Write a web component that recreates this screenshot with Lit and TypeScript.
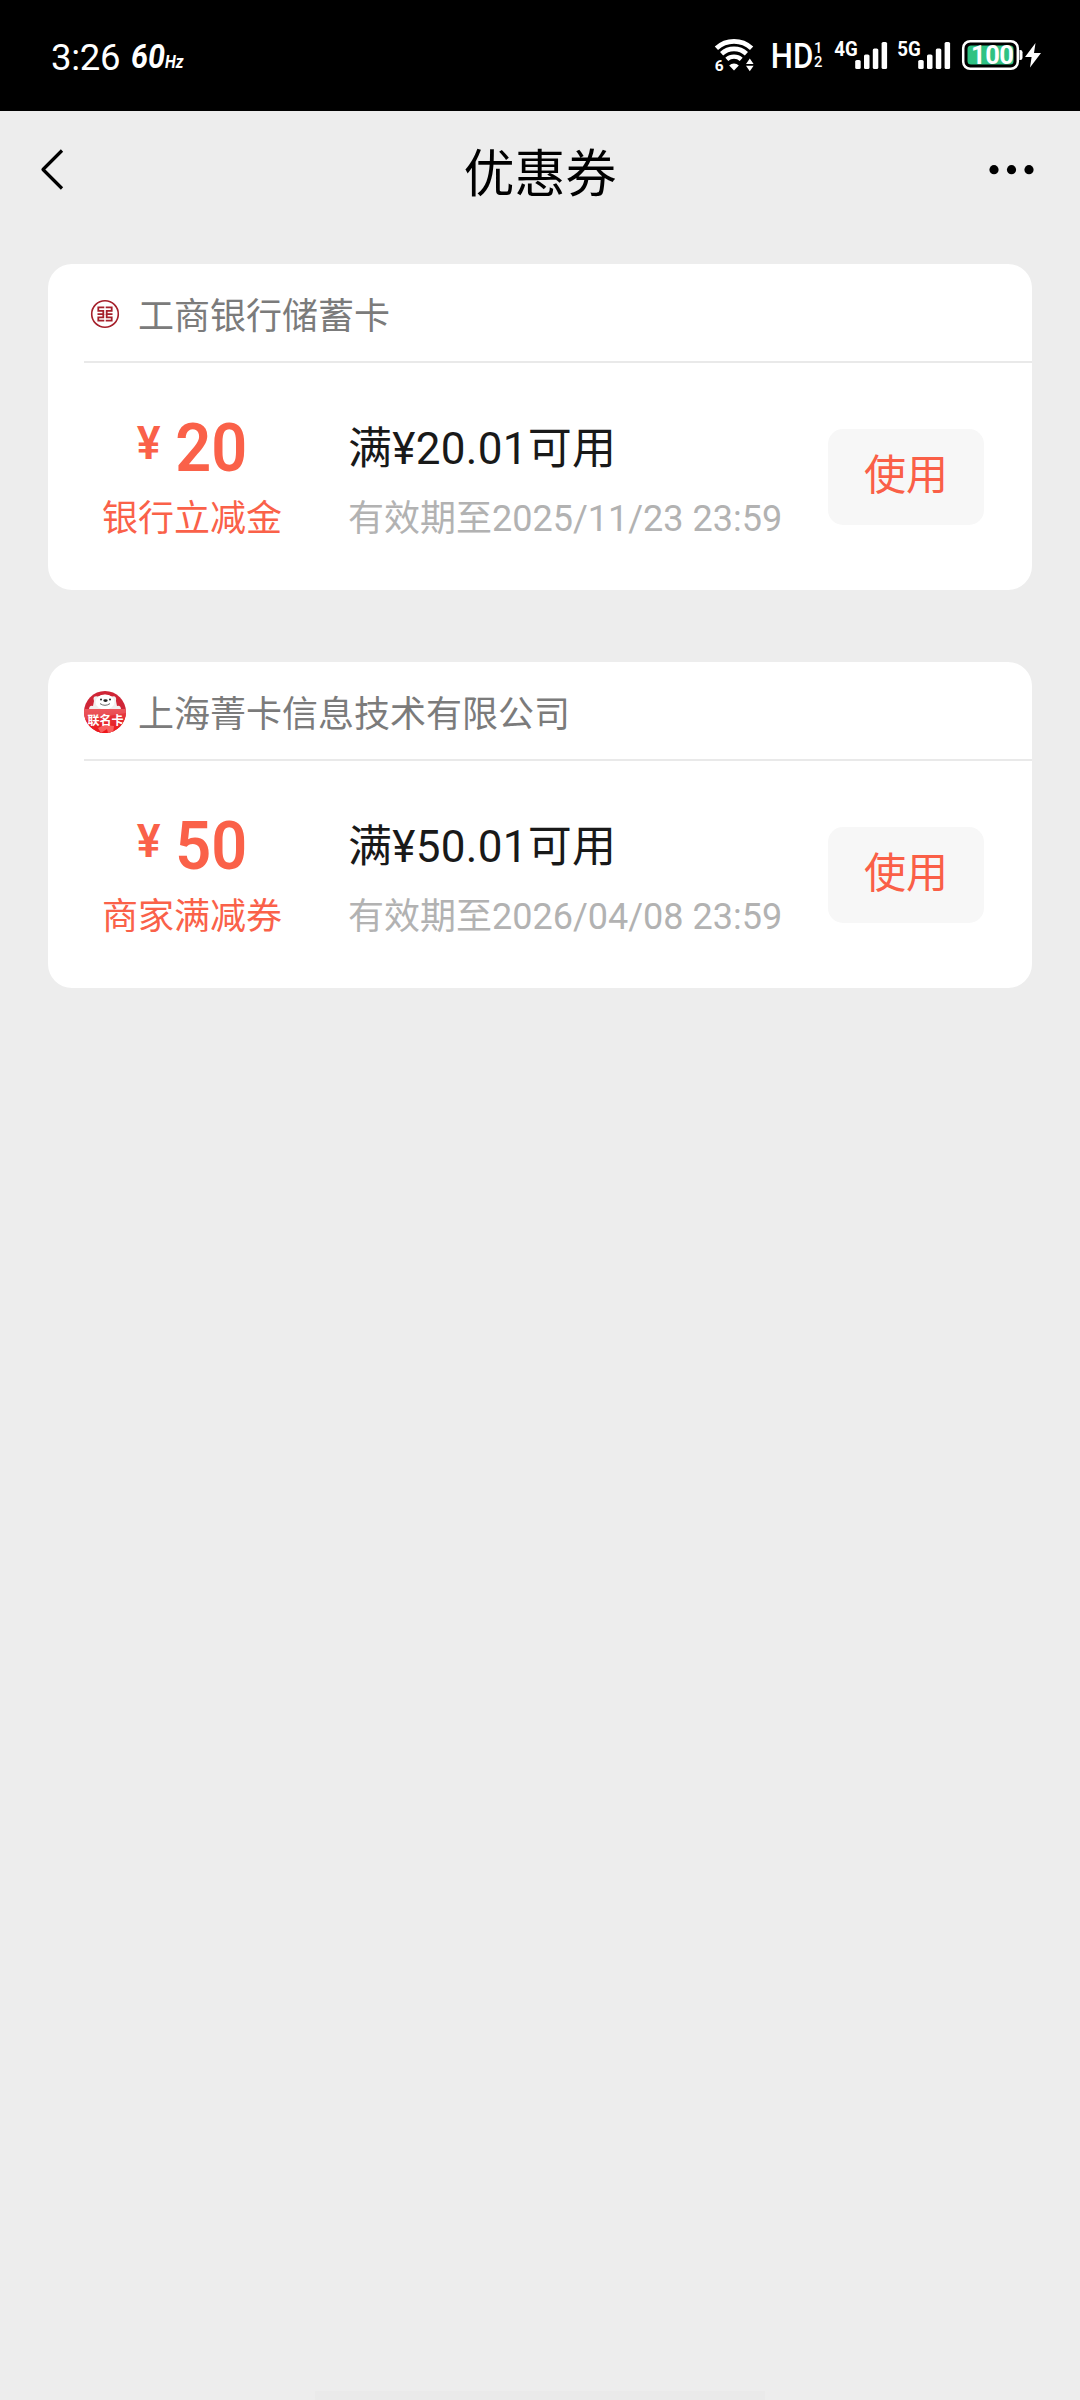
import { LitElement, html, svg, css } from "lit";
import { customElement, property } from "lit/decorators.js";

interface Coupon {
  issuer: string;
  logo: "icbc" | "joint";
  amount: string;
  kind: string;
  condition: string;
  expiry: string;
}

const COUPONS: Coupon[] = [
  {
    issuer: "工商银行储蓄卡",
    logo: "icbc",
    amount: "20",
    kind: "银行立减金",
    condition: "满¥20.01可用",
    expiry: "有效期至2025/11/23 23:59",
  },
  {
    issuer: "上海菁卡信息技术有限公司",
    logo: "joint",
    amount: "50",
    kind: "商家满减券",
    condition: "满¥50.01可用",
    expiry: "有效期至2026/04/08 23:59",
  },
];

@customElement("status-bar")
class StatusBar extends LitElement {
  static styles = css`
    :host {
      display: flex;
      box-sizing: border-box;
      height: 111px;
      padding: 0 38px 0 51px;
      background: #000;
      color: #fff;
      font-family: Roboto, "Noto Sans CJK SC", sans-serif;
    }
    .time {
      font-size: 36.5px;
      line-height: 40px;
      margin-top: 38px;
      letter-spacing: -0.3px;
    }
    .grow {
      flex: 1;
    }
    svg {
      display: block;
      margin-top: 36px;
      height: 40px;
      fill: #fff;
    }
    .rate { width: 56px; margin-left: 11px; }
    .wifi { width: 42px; }
    .hd { width: 52px; margin-left: 15.5px; }
    .sim { width: 56px; margin-left: 7px; }
    .sim.first { margin-left: 9px; }
    .battery { width: 82px; margin-left: 8.5px; }
    .line { fill: none; stroke: #fff; }
    .green { fill: #2fc283; }
    .digit { font-weight: 500; }
    .bold { font-weight: 700; }
  `;

  private signal(label: string, first: boolean) {
    return html`<svg class="sim ${first ? "first" : ""}" viewBox="0 0 56 40">
      <text class="bold" x="1.2" y="20.3" font-size="19.5" textLength="23.5" lengthAdjust="spacingAndGlyphs">${label}</text>
      <rect x="22.2" y="24" width="5.5" height="9" rx="1.6" />
      <rect x="31" y="18.5" width="5.5" height="14.5" rx="1.6" />
      <rect x="39.8" y="12.5" width="5.5" height="20.5" rx="1.6" />
      <rect x="48.6" y="6" width="5.5" height="27" rx="1.6" />
    </svg>`;
  }

  render() {
    return html`
      <span class="time">3:26</span>
      <svg class="rate" viewBox="0 0 56 40">
        <text class="bold" x="0" y="32" font-size="33.5" font-style="italic" textLength="34" lengthAdjust="spacingAndGlyphs">60</text>
        <text class="bold" x="34" y="32" font-size="17.5" font-style="italic" textLength="18.5" lengthAdjust="spacingAndGlyphs">Hz</text>
      </svg>
      <span class="grow"></span>
      <svg class="wifi" viewBox="0 0 42 40">
        <path class="line" stroke-width="4.8" d="M2.4 12.2 A26 26 0 0 1 37.6 12.2" />
        <path class="line" stroke-width="4.6" d="M7.6 17.8 A18.2 18.2 0 0 1 32.4 17.8" />
        <path class="line" stroke-width="4.4" d="M12.8 23.4 A10.8 10.8 0 0 1 27.2 23.4" />
        <path d="M20 34.5 L15.2 29.6 A6.6 6.6 0 0 1 24.8 29.6 Z" />
        <text class="bold" x="0.8" y="34.5" font-size="15.5">6</text>
        <path d="M35.8 22.5 L39.6 28 H32 Z M35.8 35.2 L39.6 29.7 H32 Z" />
      </svg>
      <svg class="hd" viewBox="0 0 52 40">
        <text class="digit" x="-1.2" y="32.2" font-size="34.5" textLength="42.5" lengthAdjust="spacingAndGlyphs">HD</text>
        <text class="digit" x="42" y="17.2" font-size="14.8">1</text>
        <text class="digit" x="42" y="31.2" font-size="14.8">2</text>
      </svg>
      ${this.signal("4G", true)} ${this.signal("5G", false)}
      <svg class="battery" viewBox="0 0 82 40">
        <rect class="line" x="3.2" y="5.2" width="54.6" height="27.6" rx="7" stroke-width="2.5" />
        <rect class="green" x="7.5" y="9.5" width="46" height="19" rx="3.5" />
        <path d="M59.5 14 h0.8 q2.2 0 2.2 2.2 v5.6 q0 2.2 -2.2 2.2 h-0.8 z" />
        <text class="bold" x="11" y="28.2" font-size="25.5" textLength="43" lengthAdjust="spacing">100</text>
        <path d="M75.5 7 L65 21 h6.6 L70 31.5 L81 17 h-7 Z" />
      </svg>
    `;
  }
}

@customElement("issuer-logo")
class IssuerLogo extends LitElement {
  @property() kind = "icbc";

  static styles = css`
    :host { display: block; width: 42px; height: 42px; }
    svg { display: block; width: 42px; height: 42px; }
    .ring, .mark { fill: none; stroke: #a5202b; }
    .label { font-family: "Noto Sans CJK SC", sans-serif; font-weight: 700; fill: #fff; }
  `;

  render() {
    return this.kind === "icbc" ? this.icbc() : this.joint();
  }

  private icbc() {
    return html`<svg viewBox="0 0 42 42">
      <circle class="ring" cx="21" cy="21" r="13.3" stroke-width="1.6" />
      <g class="mark" stroke-width="1.8">
        <path d="M20.3 14.4 H14.3 V17.8 H19.3 V21.1 H13.5" />
        <path d="M21.7 14.4 H27.7 V17.8 H22.7 V21.1 H28.5" />
        <path d="M19.3 21.1 V24.4 H14.3 V27.7 H20.3" />
        <path d="M22.7 21.1 V24.4 H27.7 V27.7 H21.7" />
      </g>
    </svg>`;
  }

  private joint() {
    return html`<svg viewBox="0 0 42 42">
      <defs>
        <clipPath id="disc"><circle cx="21" cy="21" r="21" /></clipPath>
        <linearGradient id="sheet" x1="0" y1="0" x2="0" y2="1">
          <stop offset="0" stop-color="#ea4047" />
          <stop offset="0.5" stop-color="#e4292f" />
          <stop offset="1" stop-color="#f01418" />
        </linearGradient>
      </defs>
      <g clip-path="url(#disc)">
        <rect width="42" height="42" fill="#cf2536" />
        <path fill="#f1eeee" d="M10 10 Q8 4.5 14 5.5 Q21 2 28 5.5 Q33 4.5 32 10 L33 15 Q37 14 37 19 H5 Q5 14 9 15 Z" />
        <ellipse cx="21" cy="11" rx="9.5" ry="7.5" fill="#fff" />
        <circle cx="17" cy="8.4" r="1" fill="#222" />
        <circle cx="26" cy="8.4" r="1" fill="#222" />
        <ellipse cx="21.5" cy="9.6" rx="2.2" ry="1.4" fill="#222" />
        <path d="M16 12.6 Q21 16 26 12.6" fill="none" stroke="#444" stroke-width="0.8" />
        <rect y="18" width="42" height="24" fill="url(#sheet)" />
        <path fill="#ff7a78" opacity=".7" d="M14 37 L20 34 L30 35 L29 42 H24 L23 38 L17 42 Z" />
        <path fill="#fff" opacity=".12" d="M0 18 H42 V22 L0 29 Z" />
      </g>
      <text class="label" x="3.5" y="34" font-size="12.2" textLength="36" lengthAdjust="spacingAndGlyphs">联名卡</text>
    </svg>`;
  }
}

@customElement("coupon-card")
class CouponCard extends LitElement {
  @property({ attribute: false }) coupon!: Coupon;

  static styles = css`
    :host {
      display: block;
      height: 326px;
      border-radius: 24px;
      background: #fff;
      overflow: hidden;
    }
    .head {
      display: flex;
      align-items: center;
      box-sizing: border-box;
      height: 99px;
      margin-left: 36px;
      padding-top: 2px;
      border-bottom: 2px solid #e9e9e9;
    }
    .issuer {
      margin-left: 12px;
      padding-top: 7px;
      font-size: 36px;
      line-height: 50px;
      color: #7b7b7b;
    }
    .body {
      display: flex;
      align-items: flex-start;
      padding-right: 48px;
    }
    .value {
      width: 216px;
      margin-left: 36px;
      padding-top: 52px;
      color: #fa6149;
    }
    .amount {
      display: flex;
      justify-content: center;
      align-items: flex-start;
      padding-left: 1px;
    }
    .yen {
      margin-top: 4px;
      margin-right: 12px;
      font-size: 47px;
      line-height: 48px;
      font-weight: 600;
      transform: scaleX(0.95);
    }
    .num {
      font-size: 67px;
      line-height: 67px;
      font-weight: 600;
      transform: scaleX(0.94);
    }
    .kind {
      margin-top: 12px;
      font-size: 36px;
      line-height: 50px;
      text-align: center;
      white-space: nowrap;
    }
    .info {
      flex: 1;
      margin-left: 48px;
      padding-top: 56px;
      white-space: nowrap;
    }
    .condition {
      font-size: 44px;
      line-height: 60px;
      letter-spacing: 0.3px;
      color: #191919;
    }
    .expiry {
      margin-top: 15px;
      font-size: 36px;
      line-height: 50px;
      color: #b2b2b2;
    }
    .use {
      box-sizing: border-box;
      width: 156px;
      height: 96px;
      margin: 66px 0 0;
      padding: 0 0 3px;
      border: 0;
      border-radius: 15px;
      background: #f7f7f7;
      color: #fa5f47;
      font-family: inherit;
      font-size: 42px;
      line-height: 60px;
    }
  `;

  render() {
    const c = this.coupon;
    return html`
      <div class="head">
        <issuer-logo kind=${c.logo}></issuer-logo>
        <span class="issuer">${c.issuer}</span>
      </div>
      <div class="body">
        <div class="value">
          <div class="amount"><span class="yen">¥</span><span class="num">${c.amount}</span></div>
          <div class="kind">${c.kind}</div>
        </div>
        <div class="info">
          <div class="condition">${c.condition}</div>
          <div class="expiry">${c.expiry}</div>
        </div>
        <button class="use">使用</button>
      </div>
    `;
  }
}

@customElement("app-root")
class AppRoot extends LitElement {
  static styles = css`
    :host {
      display: flex;
      flex-direction: column;
      width: 1080px;
      height: 2400px;
      overflow: hidden;
      background: #ededed;
      font-family: Roboto, "Noto Sans CJK SC", sans-serif;
    }
    .nav {
      display: grid;
      grid-template-columns: 120px 1fr 120px;
      align-items: center;
      height: 117px;
      color: #000;
    }
    .back, .more { display: block; width: 120px; height: 117px; }
    .title {
      margin: 0;
      padding-top: 11px;
      font-size: 51px;
      font-weight: 400;
      line-height: 70px;
      text-align: center;
    }
    .list {
      display: flex;
      flex: 1;
      flex-direction: column;
      gap: 72px;
      padding: 36px 48px 0;
    }
    .handle {
      align-self: center;
      width: 450px;
      height: 9px;
      background: #eaeaea;
    }
  `;

  render() {
    return html`
      <status-bar></status-bar>
      <header class="nav">
        <svg class="back" viewBox="0 0 120 117">
          <path d="M62 39.5 L43 58.5 L62 77.5" fill="none" stroke="#000" stroke-width="3.2" stroke-linejoin="round" />
        </svg>
        <h1 class="title">优惠券</h1>
        <svg class="more" viewBox="0 0 120 117">
          ${[34, 51.5, 69].map((x) => svg`<circle cx=${x} cy="58.7" r="4.6" />`)}
        </svg>
      </header>
      <main class="list">
        ${COUPONS.map((c) => html`<coupon-card .coupon=${c}></coupon-card>`)}
      </main>
      <div class="handle"></div>
    `;
  }
}
